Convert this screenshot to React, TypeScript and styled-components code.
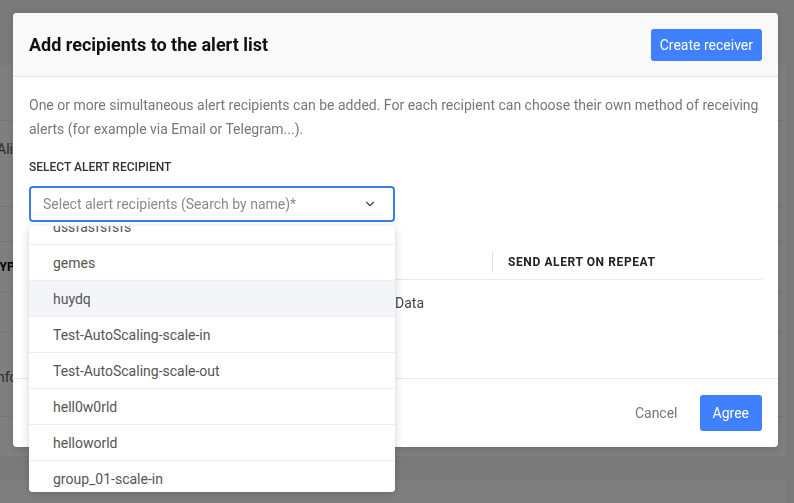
import React, { useEffect, useRef } from 'react';
import styled, { createGlobalStyle } from 'styled-components';
import { ChevronDown } from 'lucide-react';

const GlobalStyle = createGlobalStyle`
    html, body {
        margin: 0;
        padding: 0;
        width: 100%;
        height: 100%;
        overflow: hidden;
    }
    body {
        font-family: Roboto, "Liberation Sans", Arial, sans-serif;
        font-size: 14px;
        color: #333;
        background: #f4f4f4;
    }
    * {
        box-sizing: border-box;
    }
`

// page that sits under the modal
const Page = styled.div`
    width: 100vw;
    height: 100vh;
    padding: 65px 8px 0 0;
    display: flex;
    flex-direction: column;
    gap: 23px;
`

const Card = styled.div<{ $height: number }>`
    height: ${p => p.$height}px;
    background: #fff;
    border-radius: 0 4px 4px 0;
    display: flex;
    flex-direction: column;
`

const CardRow = styled.div<{ $height: number; $bold?: boolean; $top?: number }>`
    height: ${p => p.$height}px;
    border-bottom: 1px solid #ececec;
    display: flex;
    align-items: ${p => (p.$bold ? 'center' : 'flex-start')};
    padding-top: ${p => (p.$bold ? 0 : p.$top ?? 20)}px;
    font-size: ${p => (p.$bold ? 12 : 14)}px;
    font-weight: ${p => (p.$bold ? 700 : 400)};
    color: ${p => (p.$bold ? '#000' : '#555')};
    white-space: nowrap;
    overflow: hidden;
`

const Clip = styled.span<{ $shift: number }>`
    margin-left: -${p => p.$shift}px;
`

const Overlay = styled.div`
    position: fixed;
    inset: 0;
    background: rgba(0, 0, 0, 0.5);
    padding: 13px 16px 0 13px;
`

const Modal = styled.div`
    width: 765px;
    height: 434px;
    background: #fff;
    border-radius: 4px;
    box-shadow: 0 2px 8px rgba(0, 0, 0, 0.15);
    display: flex;
    flex-direction: column;
    position: relative;
`

const Header = styled.div`
    height: 64px;
    flex-shrink: 0;
    background: #f9f9f9;
    border-bottom: 1px solid #e6e6e6;
    border-radius: 4px 4px 0 0;
    padding: 0 16px;
    display: flex;
    align-items: center;
    justify-content: space-between;
`

const Title = styled.h2`
    margin: 0;
    font-size: 18px;
    font-weight: 700;
    color: #111;
`

const Button = styled.button<{ $size?: 'sm' | 'md' }>`
    border: none;
    border-radius: 3px;
    background: #3f80fd;
    color: #fff;
    font-family: inherit;
    font-size: 14px;
    height: ${p => (p.$size === 'md' ? 36 : 32)}px;
    padding: 0 ${p => (p.$size === 'md' ? 13 : 9)}px;
    cursor: pointer;
`

const GhostButton = styled.button`
    border: none;
    background: transparent;
    color: #777;
    font-family: inherit;
    font-size: 14px;
    height: 36px;
    padding: 0;
    cursor: pointer;
`

const Body = styled.div`
    flex: 1;
    padding: 16px 16px 0;
    border-bottom: 1px solid #e8e8e8;
`

const Description = styled.p`
    margin: 0;
    font-size: 14px;
    line-height: 24px;
    color: #777;
`

const Label = styled.div`
    margin-top: 18px;
    font-size: 12px;
    line-height: 16px;
    font-weight: 500;
    color: #333;
`

const SelectWrap = styled.div`
    position: relative;
    margin-top: 11px;
    width: 366px;
`

const SelectBox = styled.div`
    height: 36px;
    border: 2px solid #3a7bf2;
    border-radius: 4px;
    display: flex;
    align-items: center;
    padding: 0 16px 0 12px;
    gap: 8px;
`

const SelectInput = styled.input`
    flex: 1;
    border: none;
    outline: none;
    font-family: inherit;
    font-size: 14px;
    color: #333;
    padding: 0;
    caret-color: #222;
    &::placeholder {
        color: #8a8a8a;
    }
`

const Menu = styled.div`
    position: absolute;
    top: 40px;
    left: 0;
    width: 366px;
    height: 266px;
    background: #fff;
    border-radius: 4px;
    box-shadow: 0 2px 10px rgba(0, 0, 0, 0.18);
    overflow: hidden;
    z-index: 5;
`

const MenuItem = styled.div<{ $hover?: boolean }>`
    height: 36px;
    display: flex;
    align-items: center;
    padding-left: 24px;
    border-bottom: 1px solid #eeeeee;
    background: ${p => (p.$hover ? '#f4f5f9' : '#fff')};
    color: #555;
    font-size: 14px;
`

const Table = styled.div`
    margin-top: 22px;
`

const TableRow = styled.div<{ $head?: boolean }>`
    display: grid;
    grid-template-columns: 220px 243px 1fr;
    height: ${p => (p.$head ? 36 : 44)}px;
    border-bottom: ${p => (p.$head ? '1px solid #e8e8e8' : 'none')};
    align-items: center;
`

const HeadCell = styled.div<{ $divider?: boolean }>`
    font-size: 12px;
    font-weight: 700;
    letter-spacing: 0.6px;
    color: #222;
    padding-left: 15px;
    height: 22px;
    display: flex;
    align-items: center;
    border-left: ${p => (p.$divider ? '1px solid #e2e2e2' : 'none')};
`

const Cell = styled.div<{ $indent?: number }>`
    font-size: 14px;
    color: #444;
    padding-left: ${p => p.$indent ?? 16}px;
    padding-top: 2px;
`

const Footer = styled.div`
    height: 68px;
    flex-shrink: 0;
    display: flex;
    align-items: center;
    justify-content: flex-end;
    gap: 22px;
    padding: 0 16px;
`

const receivers = [
    'dssfasfsfsfs',
    'gemes',
    'huydq',
    'Test-AutoScaling-scale-in',
    'Test-AutoScaling-scale-out',
    'hell0w0rld',
    'helloworld',
    'group_01-scale-in',
    'group_01-scale-out',
]

const App = () => {
    const menuRef = useRef<HTMLDivElement>(null);
    const inputRef = useRef<HTMLInputElement>(null);

    useEffect(() => {
        if (menuRef.current) menuRef.current.scrollTop = 17;
        inputRef.current?.focus();
    }, []);

    return (
        <>
            <GlobalStyle />
            <Page>
                <Card $height={392}>
                    <CardRow $height={56} />
                    <CardRow $height={86}><Clip $shift={3}>Alive</Clip></CardRow>
                    <CardRow $height={35} />
                    <CardRow $height={50} $bold><Clip $shift={8}>TYPE</Clip></CardRow>
                    <CardRow $height={40} />
                    <CardRow $height={85} $top={37}><Clip $shift={3}>nfo</Clip></CardRow>
                    <CardRow $height={40} />
                </Card>
                <Card $height={60} />
            </Page>

            <Overlay>
                <Modal>
                    <Header>
                        <Title>Add recipients to the alert list</Title>
                        <Button>Create receiver</Button>
                    </Header>

                    <Body>
                        <Description>
                            One or more simultaneous alert recipients can be added. For each recipient can choose their own method of receiving
                            alerts (for example via Email or Telegram...).
                        </Description>
                        <Label>SELECT ALERT RECIPIENT</Label>
                        <SelectWrap>
                            <SelectBox>
                                <SelectInput ref={inputRef} placeholder="Select alert recipients (Search by name)*" />
                                <ChevronDown size={14} strokeWidth={2} color="#444" />
                            </SelectBox>
                            <Menu ref={menuRef}>
                                {receivers.map(name => (
                                    <MenuItem key={name} $hover={name === 'huydq'}>{name}</MenuItem>
                                ))}
                            </Menu>
                        </SelectWrap>

                        <Table>
                            <TableRow $head>
                                <HeadCell>NAME</HeadCell>
                                <HeadCell $divider>METHOD</HeadCell>
                                <HeadCell $divider>SEND ALERT ON REPEAT</HeadCell>
                            </TableRow>
                            <TableRow>
                                <Cell>admin</Cell>
                                <Cell $indent={146}>Data</Cell>
                                <Cell />
                            </TableRow>
                        </Table>
                    </Body>

                    <Footer>
                        <GhostButton>Cancel</GhostButton>
                        <Button $size="md">Agree</Button>
                    </Footer>
                </Modal>
            </Overlay>
        </>
    );
};

export default App;
